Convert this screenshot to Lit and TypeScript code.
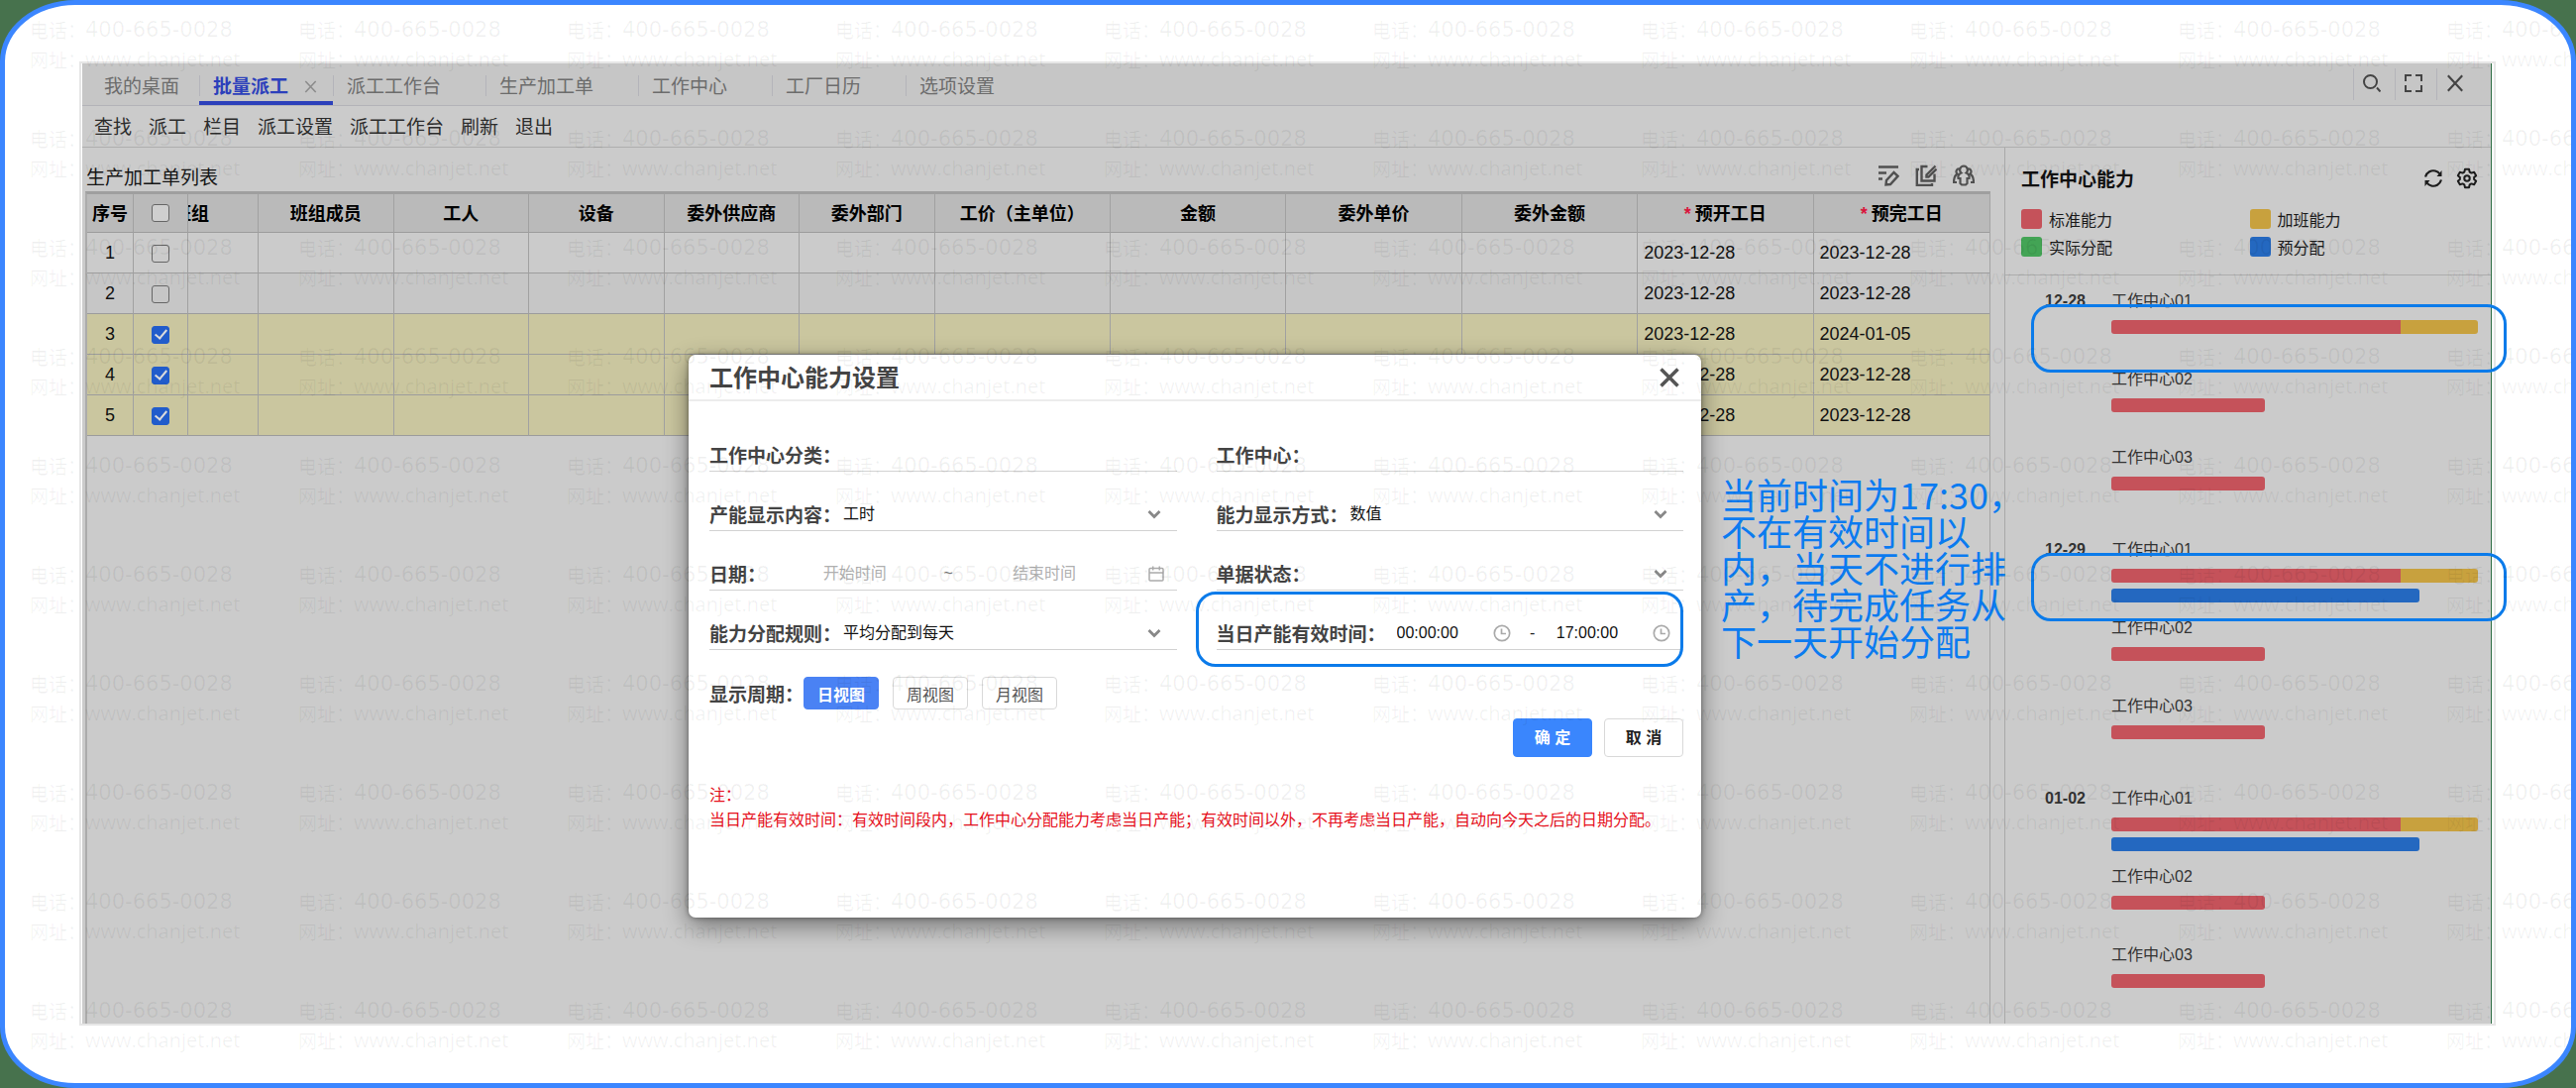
import { LitElement, html, css, nothing } from "lit";
import { customElement, state } from "lit/decorators.js";
import { classMap } from "lit/directives/class-map.js";

interface Column {
  title: string;
  size: "mid" | "wide" | "clipped";
  required?: boolean;
}

interface Order {
  no: number;
  checked: boolean;
  start: string;
  end: string;
}

interface Capacity {
  name: string;
  standard: number;
  overtime: number;
  planned: number;
}

interface Day {
  date: string;
  marked: boolean;
  centers: Capacity[];
}

const TABS = ["我的桌面", "批量派工", "派工工作台", "生产加工单", "工作中心", "工厂日历", "选项设置"];
const ACTIONS = ["查找", "派工", "栏目", "派工设置", "派工工作台", "刷新", "退出"];

const COLUMNS: Column[] = [
  { title: "班组", size: "clipped" },
  { title: "班组成员", size: "mid" },
  { title: "工人", size: "mid" },
  { title: "设备", size: "mid" },
  { title: "委外供应商", size: "mid" },
  { title: "委外部门", size: "mid" },
  { title: "工价（主单位）", size: "wide" },
  { title: "金额", size: "wide" },
  { title: "委外单价", size: "wide" },
  { title: "委外金额", size: "wide" },
  { title: "预开工日", size: "wide", required: true },
  { title: "预完工日", size: "wide", required: true },
];

const LEGEND = [
  { name: "标准能力", tone: "red" },
  { name: "加班能力", tone: "yellow" },
  { name: "实际分配", tone: "green" },
  { name: "预分配", tone: "blue" },
];

const centers = (planned: number): Capacity[] => [
  { name: "工作中心01", standard: 79, overtime: 21, planned },
  { name: "工作中心02", standard: 42, overtime: 0, planned: 0 },
  { name: "工作中心03", standard: 42, overtime: 0, planned: 0 },
];

const DAYS: Day[] = [
  { date: "12-28", marked: true, centers: centers(0) },
  { date: "12-29", marked: true, centers: centers(84) },
  { date: "01-02", marked: false, centers: centers(84) },
];

const FONT = css`"Liberation Sans", "Noto Sans CJK SC", sans-serif`;

const closeIcon = html`<svg viewBox="0 0 20 20" width="20" height="20" aria-hidden="true">
  <path d="M2 1.5 18 18.5M18 1.5 2 18.5" fill="none" stroke="currentColor" stroke-width="2.4" /></svg>`;

const chevronIcon = html`<svg class="chevron" viewBox="0 0 14 10" width="14" height="10" aria-hidden="true">
  <path d="M1.5 2 7 7.5 12.500 2" fill="none" stroke="currentColor" stroke-width="2.8" /></svg>`;

const clockIcon = html`<svg class="glyph" viewBox="0 0 18 18" width="18" height="18" aria-hidden="true">
  <g fill="none" stroke="currentColor" stroke-width="1.700"><circle cx="9" cy="9" r="7.700" /><path d="M8.500 4.500v5h4.500" /></g></svg>`;

const calendarIcon = html`<svg class="glyph" viewBox="0 0 16 16" width="16" height="16" aria-hidden="true">
  <g fill="none" stroke="currentColor" stroke-width="1.5"><rect x="1" y="2.500" width="14" height="12.500" rx="1" /><path d="M1 7h14M4.700 0.500v4M11.300 0.500v4" /></g></svg>`;

@customElement("watermark-layer")
export class WatermarkLayer extends LitElement {
  static styles = css`
    :host {
      position: absolute;
      inset: 0;
      overflow: hidden;
      pointer-events: none;
    }
    .sheet {
      display: grid;
      grid-template-columns: repeat(10, 271px);
      grid-auto-rows: 110px;
      padding: 10px 0 0 25px;
      color: rgba(0, 0, 0, 0.06);
      font-size: 19px;
      line-height: 30px;
      white-space: nowrap;
    }
    .line {
      display: flex;
      height: 30px;
    }
    .caption {
      width: 56px;
      flex: none;
      font-family: "Noto Sans CJK SC", sans-serif;
    }
    .phone {
      font-family: "DejaVu Sans", sans-serif;
      font-size: 21px;
    }
    .site {
      font-family: "Open Sans", sans-serif;
      font-size: 20px;
      font-weight: 500;
    }
  `;

  render() {
    return html`<div class="sheet" aria-hidden="true">
      ${Array.from(
        { length: 100 },
        () => html`<div>
          <div class="line"><span class="caption">电话：</span><span class="phone">400-665-0028</span></div>
          <div class="line"><span class="caption">网址：</span><span class="site">www.chanjet.net</span></div>
        </div>`,
      )}
    </div>`;
  }
}

@customElement("order-grid")
export class OrderGrid extends LitElement {
  static styles = css`
    :host {
      display: flex;
      flex-direction: column;
      min-width: 0;
      font-family: ${FONT};
    }
    .head {
      display: flex;
      align-items: center;
      justify-content: space-between;
      height: 44px;
      padding: 12px 16px 0 1px;
      box-sizing: border-box;
    }
    .title {
      margin: 0;
      font-size: 19px;
      font-weight: 400;
      color: #161616;
    }
    .tools {
      display: flex;
      gap: 16px;
      color: #505050;
    }
    .tool {
      display: flex;
      padding: 0;
      border: 0;
      background: none;
      color: inherit;
    }
    .frame {
      flex: 1;
      border-left: 2px solid #ababab;
      border-right: 1px solid #a4a4a4;
      border-top: 3px solid #9f9f9f;
    }
    table {
      width: 100%;
      table-layout: fixed;
      border-spacing: 0;
      font-size: 18px;
      color: #111;
    }
    .w-no { width: 47px; }
    .w-check { width: 55px; }
    .w-clipped { width: 71px; }
    .w-mid { width: 7.11%; }
    th,
    td {
      box-sizing: border-box;
      padding: 0;
      border-right: 1px solid #a1a1a1;
      border-bottom: 1px solid #9c9c9c;
      overflow: hidden;
      white-space: nowrap;
    }
    th:last-child,
    td:last-child {
      border-right: 0;
    }
    th {
      height: 39px;
      padding-bottom: 2px;
      background: #bababa;
      font-weight: 700;
      color: #000;
    }
    td {
      height: 41px;
    }
    .even td { background: #c6c6c6; }
    .picked td { background: #cac69f; }
    .center {
      text-align: center;
    }
    .date {
      padding-left: 6px;
    }
    .scrolled {
      display: flex;
      justify-content: flex-end;
    }
    .scrolled span {
      flex: none;
      width: 134px;
      text-align: center;
    }
    .star {
      color: #d9143c;
      margin-right: 4px;
    }
    .box {
      appearance: none;
      display: inline-grid;
      place-content: center;
      width: 18px;
      height: 18px;
      margin: 0;
      border: 1px solid #666;
      border-radius: 3px;
      vertical-align: middle;
    }
    th .box {
      background: #cfcfcf;
    }
    .box:checked {
      background: #215ccb;
      border-color: #215ccb;
    }
    .box:checked::before {
      content: "";
      width: 5px;
      height: 10px;
      margin-top: -3px;
      border: solid #dcdcdc;
      border-width: 0 2px 2px 0;
      transform: rotate(40deg);
    }
  `;

  @state() private orders: Order[] = [
    { no: 1, checked: false, start: "2023-12-28", end: "2023-12-28" },
    { no: 2, checked: false, start: "2023-12-28", end: "2023-12-28" },
    { no: 3, checked: true, start: "2023-12-28", end: "2024-01-05" },
    { no: 4, checked: true, start: "2023-12-28", end: "2023-12-28" },
    { no: 5, checked: true, start: "2023-12-28", end: "2023-12-28" },
  ];

  private toggle(no: number) {
    this.orders = this.orders.map((o) => (o.no === no ? { ...o, checked: !o.checked } : o));
  }

  render() {
    return html`
      <header class="head">
        <h2 class="title">生产加工单列表</h2>
        <div class="tools">
          <button class="tool" type="button" aria-label="编辑列表">
            <svg viewBox="0 0 22 22" width="22" height="22" aria-hidden="true">
              <g fill="none" stroke="currentColor" stroke-width="2.4">
                <path d="M1 2.500h20M1 8.500h8M1 14.500h4" />
                <path d="M8.500 20.500 9 16l7.500-8 4 3.800L13 20z" />
              </g>
            </svg>
          </button>
          <button class="tool" type="button" aria-label="批量编辑">
            <svg viewBox="0 0 22 22" width="22" height="22" aria-hidden="true">
              <g fill="none" stroke="currentColor" stroke-width="2.4">
                <path d="M12.500 2H6.500v14.500h13V9.500" />
                <path d="M4 5H1.800v16H17v-2" />
                <path d="M20.500 1.500 11.500 10.500v2h2l8-8" />
              </g>
            </svg>
          </button>
          <button class="tool" type="button" aria-label="人员">
            <svg viewBox="0 0 22 22" width="22" height="22" aria-hidden="true">
              <g fill="none" stroke="currentColor" stroke-width="2.2">
                <path d="M11 1.500a4 4 0 0 1 2.500 7c2.500 1 3.500 3 3 5.500h-2v5l-1.500 1.500h-4L7.500 19v-5h-2c-.5-2.500.5-4.500 3-5.500a4 4 0 0 1 2.500-7z" />
                <path d="M7 4.500c-3.500-.5-4.500 3-2.500 5C2 11 1 13.500 1 18h3M15 4.500c3.500-.5 4.500 3 2.500 5C20 11 21 13.500 21 18h-3" />
              </g>
            </svg>
          </button>
        </div>
      </header>
      <div class="frame">
        <table>
          <colgroup>
            <col class="w-no" />
            <col class="w-check" />
            ${COLUMNS.map((c) => html`<col class="w-${c.size}" />`)}
          </colgroup>
          <thead>
            <tr>
              <th scope="col">序号</th>
              <th scope="col"><input class="box" type="checkbox" aria-label="全选" /></th>
              ${COLUMNS.map(
                (c) => html`<th scope="col">
                  ${c.size === "clipped"
                    ? html`<div class="scrolled"><span>${c.title}</span></div>`
                    : html`${c.required ? html`<span class="star">*</span>` : nothing}${c.title}`}
                </th>`,
              )}
            </tr>
          </thead>
          <tbody>
            ${this.orders.map(
              (o, i) => html`<tr class=${classMap({ even: i % 2 === 1, picked: o.checked })}>
                <td class="center">${o.no}</td>
                <td class="center">
                  <input
                    class="box"
                    type="checkbox"
                    aria-label="选择第${o.no}行"
                    .checked=${o.checked}
                    @change=${() => this.toggle(o.no)}
                  />
                </td>
                ${COLUMNS.slice(0, -2).map(() => html`<td></td>`)}
                <td class="date">${o.start}</td>
                <td class="date">${o.end}</td>
              </tr>`,
            )}
          </tbody>
        </table>
      </div>
    `;
  }
}

@customElement("capacity-panel")
export class CapacityPanel extends LitElement {
  static styles = css`
    :host {
      display: block;
      font-family: ${FONT};
      font-size: 16px;
      color: #333;
    }
    .head {
      display: flex;
      align-items: center;
      height: 61px;
      padding: 0 13px 0 16px;
      gap: 13px;
    }
    .title {
      flex: 1;
      margin: 0;
      font-size: 19px;
      font-weight: 700;
      color: #111;
    }
    .tool {
      display: flex;
      padding: 0;
      border: 0;
      background: none;
      color: #1c1c1c;
    }
    .legend {
      display: grid;
      grid-template-columns: 1fr 1fr;
      gap: 7px 0;
      margin: 0;
      padding: 0 13px 18px 16px;
      list-style: none;
      border-bottom: 1px solid #adadad;
      color: #1a1a1a;
    }
    .key {
      display: flex;
      align-items: center;
      gap: 7px;
      height: 21px;
    }
    .swatch {
      width: 21px;
      height: 20px;
      border-radius: 3px;
    }
    .red { background: #c5525a; }
    .yellow { background: #c8a13e; }
    .green { background: #43a455; }
    .blue { background: #2468c0; }
    .days {
      padding-top: 13px;
    }
    .day {
      position: relative;
      display: grid;
      grid-template-columns: 67px 1fr;
      padding: 0 13px 14px 40px;
    }
    .day:last-child {
      padding-bottom: 0;
    }
    .date,
    .name {
      line-height: 26px;
    }
    .date {
      font-weight: 700;
    }
    .center {
      height: 79px;
    }
    .track {
      display: flex;
      height: 14px;
      margin-top: 6px;
      border-radius: 3px;
      overflow: hidden;
    }
    .mark {
      position: absolute;
      top: 16px;
      left: 26px;
      right: -16px;
      height: 69px;
      box-sizing: border-box;
      border: 3px solid #0b7bea;
      border-radius: 20px;
    }
  `;

  render() {
    return html`
      <header class="head">
        <h2 class="title">工作中心能力</h2>
        <button class="tool" type="button" aria-label="刷新">
          <svg viewBox="0 0 20 20" width="20" height="20" aria-hidden="true">
            <g fill="none" stroke="currentColor" stroke-width="2.2">
              <path d="M2 8.500C3.500 3.500 8 1.500 12 2.500c2 .5 3.500 1.500 4.500 3" />
              <path d="M18 11.500C16.500 16.500 12 18.500 8 17.500c-2-.5-3.500-1.500-4.500-3" />
            </g>
            <path d="M18.500 2v6h-5zM1.500 18v-6h5z" fill="currentColor" />
          </svg>
        </button>
        <button class="tool" type="button" aria-label="设置">
          <svg viewBox="0 0 24 24" width="22" height="22" aria-hidden="true">
            <g fill="none" stroke="currentColor" stroke-width="2.2" stroke-linejoin="round">
              <path
                d="M9.800 2h4.400l.7 3 1.900 1.100 3-.9 2.200 3.800-2.200 2v2l2.200 2-2.200 3.800-3-.9-1.900 1.100-.7 3H9.800l-.7-3-1.900-1.100-3 .9L2 15l2.200-2v-2L2 9l2.200-3.800 3 .9L9.100 5z"
              />
              <circle cx="12" cy="12" r="3" />
            </g>
          </svg>
        </button>
      </header>
      <ul class="legend">
        ${LEGEND.map((l) => html`<li class="key"><span class="swatch ${l.tone}"></span>${l.name}</li>`)}
      </ul>
      <div class="days">
        ${DAYS.map(
          (d) => html`<section class="day">
            <div class="date">${d.date}</div>
            <div>
              ${d.centers.map(
                (c) => html`<div class="center">
                  <div class="name">${c.name}</div>
                  <div class="track" style="width:${c.standard + c.overtime}%">
                    <div class="red" style="flex:${c.standard}"></div>
                    ${c.overtime ? html`<div class="yellow" style="flex:${c.overtime}"></div>` : nothing}
                  </div>
                  ${c.planned ? html`<div class="track blue" style="width:${c.planned}%"></div>` : nothing}
                </div>`,
              )}
            </div>
            ${d.marked ? html`<div class="mark"></div>` : nothing}
          </section>`,
        )}
      </div>
    `;
  }
}

@customElement("capacity-dialog")
export class CapacityDialog extends LitElement {
  static styles = css`
    :host {
      display: block;
      background: #fff;
      border-radius: 7px;
      box-shadow: 0 8px 24px rgba(0, 0, 0, 0.45), 0 0 5px rgba(0, 0, 0, 0.4);
      font-family: ${FONT};
      font-size: 16px;
      color: #222;
    }
    .head {
      display: flex;
      align-items: center;
      justify-content: space-between;
      height: 45px;
      padding: 0 22px 0 21px;
      border-bottom: 2px solid #ececec;
    }
    .title {
      margin: 0;
      padding-bottom: 2px;
      font-size: 24px;
      font-weight: 700;
      color: #444;
    }
    button {
      font-family: inherit;
      font-size: 16px;
    }
    .close {
      display: flex;
      padding: 0;
      border: 0;
      background: none;
      color: #555;
    }
    .body {
      padding: 37px 18px 86px 21px;
    }
    .fields {
      display: grid;
      grid-template-columns: 1fr 1fr;
      gap: 26px 40px;
    }
    .field {
      position: relative;
      display: flex;
      align-items: center;
      height: 34px;
      box-sizing: border-box;
      border-bottom: 1px solid #d2d2d2;
    }
    .label {
      flex: none;
      font-size: 19px;
      font-weight: 700;
      color: #444;
    }
    .input,
    .select {
      flex: 1;
      min-width: 0;
      width: 0;
      padding: 0 0 0 2px;
      border: 0;
      outline: 0;
      background: none;
      font-family: inherit;
      font-size: 16px;
      color: #111;
    }
    .select {
      appearance: none;
    }
    .chevron {
      flex: none;
      margin-right: 16px;
      color: #888;
    }
    .glyph {
      flex: none;
      margin-right: 13px;
      color: #aaa;
    }
    .range {
      text-align: center;
    }
    .range::placeholder {
      color: #b0b0b0;
    }
    .tilde {
      width: 14px;
      text-align: center;
      color: #777;
    }
    .range-end {
      margin-right: 17px;
    }
    .time {
      display: flex;
      align-items: center;
      flex: 1;
    }
    .time .glyph {
      margin: 0;
    }
    .times {
      display: flex;
      align-items: center;
      flex: 1;
      padding: 0 13px 0 9px;
    }
    .dash {
      width: 44px;
      text-align: center;
    }
    .mark {
      position: absolute;
      top: -25px;
      left: -21px;
      right: 0;
      height: 76px;
      box-sizing: border-box;
      border: 3px solid #0b7bea;
      border-radius: 20px;
      pointer-events: none;
    }
    .period {
      display: flex;
      align-items: center;
      gap: 14px;
      margin-top: 27px;
    }
    .period .label {
      margin-right: -14px;
    }
    .view {
      width: 76px;
      height: 33px;
      padding: 0;
      border: 1px solid #d9d9d9;
      border-radius: 4px;
      background: #fff;
      color: #555;
    }
    .view.on {
      border-color: #4a82f4;
      background: #4a82f4;
      color: #fff;
      font-weight: 700;
    }
    .actions {
      display: flex;
      justify-content: flex-end;
      gap: 12px;
      margin-top: 9px;
    }
    .action {
      width: 80px;
      height: 39px;
      padding: 0 0 3px;
      border: 1px solid #d9d9d9;
      border-radius: 4px;
      background: #fff;
      color: #222;
      font-weight: 700;
    }
    .primary {
      border-color: #3a86fd;
      background: #3a86fd;
      color: #fff;
    }
    .note {
      margin: 26px 0 0;
      line-height: 25px;
      color: #e6101c;
      white-space: nowrap;
    }
  `;

  @state() private view = "日视图";

  private select(id: string, label: string, value: string) {
    return html`<div class="field">
      <label class="label" for=${id}>${label}：</label>
      <select class="select" id=${id}>
        <option>${value}</option>
      </select>
      ${chevronIcon}
    </div>`;
  }

  private text(id: string, label: string) {
    return html`<div class="field">
      <label class="label" for=${id}>${label}：</label>
      <input class="input" id=${id} type="text" />
    </div>`;
  }

  render() {
    return html`
      <header class="head">
        <h2 class="title">工作中心能力设置</h2>
        <button class="close" type="button" aria-label="关闭">
          <svg viewBox="0 0 20 20" width="20" height="20" aria-hidden="true">
            <path d="M1.500 1.500 18.500 18.500M18.500 1.500 1.500 18.500" stroke="currentColor" stroke-width="3.500" />
          </svg>
        </button>
      </header>
      <div class="body">
        <div class="fields">
          ${this.text("category", "工作中心分类")} ${this.text("center", "工作中心")}
          ${this.select("content", "产能显示内容", "工时")} ${this.select("mode", "能力显示方式", "数值")}
          <div class="field">
            <label class="label" for="from">日期：</label>
            <input class="input range" id="from" type="text" placeholder="开始时间" />
            <span class="tilde">~</span>
            <input class="input range range-end" type="text" placeholder="结束时间" aria-label="结束时间" />
            ${calendarIcon}
          </div>
          ${this.select("status", "单据状态", "")} ${this.select("rule", "能力分配规则", "平均分配到每天")}
          <div class="field">
            <label class="label" for="valid-from">当日产能有效时间：</label>
            <div class="times">
              <span class="time"><input class="input" id="valid-from" type="text" value="00:00:00" />${clockIcon}</span>
              <span class="dash">-</span>
              <span class="time"><input class="input" type="text" value="17:00:00" aria-label="有效时间止" />${clockIcon}</span>
            </div>
            <div class="mark"></div>
          </div>
        </div>
        <div class="period">
          <span class="label">显示周期：</span>
          ${["日视图", "周视图", "月视图"].map(
            (v) => html`<button
              type="button"
              class=${classMap({ view: true, on: v === this.view })}
              aria-pressed=${v === this.view}
              @click=${() => (this.view = v)}
            >${v}</button>`,
          )}
        </div>
        <div class="actions">
          <button class="action primary" type="button">确 定</button>
          <button class="action" type="button">取 消</button>
        </div>
        <p class="note">
          注：<br />当日产能有效时间：有效时间段内，工作中心分配能力考虑当日产能；有效时间以外，不再考虑当日产能，自动向今天之后的日期分配。
        </p>
      </div>
    `;
  }
}

@customElement("app-root")
export class AppRoot extends LitElement {
  static styles = css`
    :host {
      display: block;
      background: #47724d;
      font-family: ${FONT};
    }
    .card {
      position: relative;
      display: flex;
      box-sizing: border-box;
      min-height: 100vh;
      padding: 57px 76px 58px 75px;
      border: 5px solid #3b86ff;
      border-radius: 76px / 62px;
      background: #fff;
      overflow: hidden;
    }
    .window {
      position: relative;
      display: flex;
      flex: 1;
      min-width: 0;
      padding: 0 2px 0 1px;
      border: 2px solid #e6e6e6;
    }
    .screen {
      display: flex;
      flex-direction: column;
      flex: 1;
      min-width: 0;
      background: #cbcbcb;
      border-right: 1px solid #2f6e45;
    }
    .tabs {
      display: flex;
      align-items: center;
      height: 42px;
      background: #c6c6c6;
      border-bottom: 1px solid #b3b3b8;
      font-size: 19px;
      color: #6c6c6c;
    }
    .tab {
      position: relative;
      display: flex;
      align-items: center;
      align-self: stretch;
      box-sizing: border-box;
      padding: 1px 45px 0 14px;
      color: inherit;
      text-decoration: none;
      white-space: nowrap;
    }
    .tab + .tab::before {
      content: "";
      position: absolute;
      left: 0;
      top: 12px;
      bottom: 9px;
      border-left: 1px solid #b4b4ba;
    }
    .tab:first-child {
      padding: 1px 20px 0 22px;
    }
    .tab.on {
      padding-right: 16px;
      gap: 16px;
      color: #2c40bb;
      font-weight: 700;
      box-shadow: inset 0 -4px #2c40bb;
    }
    .tab-close {
      display: flex;
      padding: 4px 0 0;
      color: #8b8b8b;
    }
    .tab-close svg {
      width: 13px;
      height: 13px;
    }
    .spacer {
      flex: 1;
    }
    .ctl {
      display: flex;
      align-items: center;
      justify-content: center;
      width: 42px;
      height: 32px;
      padding: 0 6px 2px 0;
      border: 0;
      border-left: 1px solid #b4b4ba;
      background: none;
      color: #444;
    }
    .ctl svg {
      width: 18px;
      height: 18px;
    }
    .ctl:last-child {
      margin-right: 13px;
    }
    .bar {
      display: flex;
      align-items: center;
      gap: 17px;
      height: 41px;
      padding-left: 12px;
      border-bottom: 1px solid #aeaeae;
    }
    .cmd {
      padding: 0 0 3px;
      border: 0;
      background: none;
      font-family: inherit;
      font-size: 19px;
      color: #2c2c2c;
    }
    .main {
      display: flex;
      flex: 1;
    }
    .orders {
      flex: 1;
      padding: 0 14px 0 3px;
    }
    .capacity {
      flex: none;
      width: 490px;
      border-left: 1px solid #a9a9a9;
    }
    .dialog {
      position: absolute;
      top: 294px;
      left: 613px;
      width: 1022px;
    }
    .remark {
      position: absolute;
      top: 416px;
      left: 1655px;
      margin: 0;
      font-family: "Noto Sans CJK SC", sans-serif;
      font-size: 36px;
      font-weight: 400;
      line-height: 37px;
      color: #0b7bf0;
      white-space: nowrap;
    }
  `;

  @state() private active = "批量派工";

  private tab(name: string) {
    const on = name === this.active;
    return html`<a class=${classMap({ tab: true, on })} href="#" @click=${(e: Event) => {
      e.preventDefault();
      this.active = name;
    }}>${name}${on ? html`<span class="tab-close">${closeIcon}</span>` : nothing}</a>`;
  }

  render() {
    return html`
      <div class="card">
        <div class="window">
          <div class="screen">
            <nav class="tabs">
              ${TABS.map((t) => this.tab(t))}
              <span class="spacer"></span>
              <button class="ctl" type="button" aria-label="搜索">
                <svg viewBox="0 0 18 18" aria-hidden="true">
                  <g fill="none" stroke="currentColor" stroke-width="2"><circle cx="7.500" cy="7.500" r="6.500" /><path d="m14 13.500 3.500 4" /></g>
                </svg>
              </button>
              <button class="ctl" type="button" aria-label="全屏">
                <svg viewBox="0 0 18 18" aria-hidden="true">
                  <path d="M7 1H1v6M11 1h6v6M1 11v6h6M17 11v6h-6" fill="none" stroke="currentColor" stroke-width="2" />
                </svg>
              </button>
              <button class="ctl" type="button" aria-label="关闭">${closeIcon}</button>
            </nav>
            <div class="bar">
              ${ACTIONS.map((a) => html`<button class="cmd" type="button">${a}</button>`)}
            </div>
            <div class="main">
              <order-grid class="orders"></order-grid>
              <capacity-panel class="capacity"></capacity-panel>
            </div>
          </div>
          <capacity-dialog class="dialog" role="dialog" aria-label="工作中心能力设置"></capacity-dialog>
          <p class="remark">当前时间为17:30，<br />不在有效时间以<br />内，当天不进行排<br />产，待完成任务从<br />下一天开始分配</p>
        </div>
        <watermark-layer></watermark-layer>
      </div>
    `;
  }
}
